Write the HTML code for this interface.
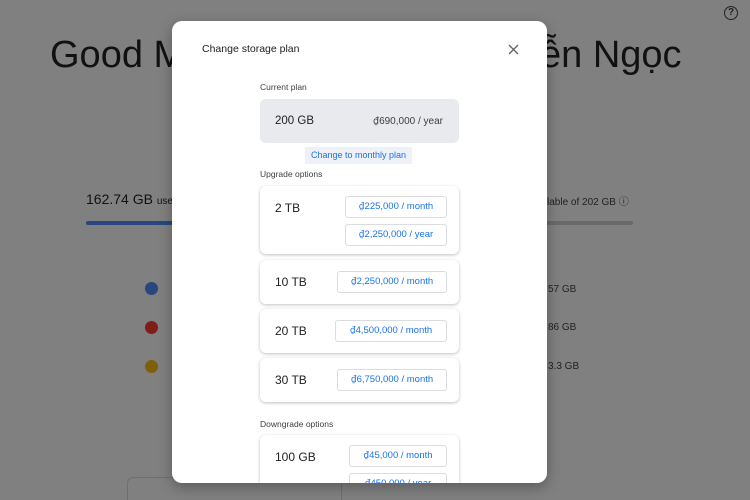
<!DOCTYPE html>
<html><head><style>
*{box-sizing:border-box;margin:0;padding:0}
html,body{width:750px;height:500px;overflow:hidden}
body{background:#808080;font-family:"Liberation Sans","Noto Sans CJK SC",sans-serif;position:relative;color:#202124}
.a{position:absolute}
.d{font-family:"DejaVu Sans",sans-serif;font-size:0.95em}
.dlg{left:172px;top:21px;width:375px;height:462px;background:#fff;border-radius:10px;overflow:hidden;box-shadow:0 4px 14px rgba(0,0,0,.3)}
.card{position:absolute;left:88px;width:199px;background:#fff;border-radius:6px;box-shadow:0 1px 3px rgba(0,0,0,.25)}
.btn{position:absolute;border:1px solid #dadce0;border-radius:3px;color:#1a73e8;font-size:9.5px;text-align:center;line-height:20px;height:22px;background:#fff}
.sz{position:absolute;left:15px;font-size:12px;color:#202124}
.lbl{position:absolute;left:88px;font-size:8.5px;color:#3c4043}
</style></head><body>
<div class="a" style="left:50px;top:34px;font-size:38px;color:#111">Good M</div>
<div class="a" style="left:540px;top:34px;font-size:38px;color:#111">ễn Ngọc</div>
<div class="a" style="left:724px;top:6px;width:14px;height:14px;border:1.5px solid #222;border-radius:50%;font-size:10px;line-height:11px;text-align:center;font-weight:bold">?</div>
<div class="a" style="left:86px;top:191px;font-size:14px;color:#111">162.74 GB <span style="font-size:10px">use</span></div>
<div class="a" style="left:547px;top:193px;font-size:10px;color:#222">lable of 202 GB &#9432;</div>
<div class="a" style="left:86px;top:221px;width:547px;height:4px;background:#6a6a6a;border-radius:2px"></div>
<div class="a" style="left:86px;top:221px;width:100px;height:4px;background:#27477e;border-radius:2px"></div>
<div class="a" style="left:145px;top:282px;width:13px;height:13px;border-radius:50%;background:#27477e"></div>
<div class="a" style="left:145px;top:321px;width:13px;height:13px;border-radius:50%;background:#7e1e17"></div>
<div class="a" style="left:145px;top:360px;width:13px;height:13px;border-radius:50%;background:#7f5f07"></div>
<div class="a" style="left:548px;top:284px;font-size:10px;color:#222">57 GB</div>
<div class="a" style="left:548px;top:322px;font-size:10px;color:#222">86 GB</div>
<div class="a" style="left:548px;top:361px;font-size:10px;color:#222">3.3 GB</div>
<div class="a" style="left:127px;top:477px;width:215px;height:40px;border:1px solid #6e6e6e;border-radius:6px"></div>
<div class="a dlg">
 <div class="a" style="left:30px;top:22px;font-size:10.5px;color:#202124">Change storage plan</div>
 <svg class="a" style="left:336px;top:23px" width="11" height="11" viewBox="0 0 11 11"><path d="M1 1L10 10M10 1L1 10" stroke="#5f6368" stroke-width="1.3"/></svg>
 <div class="lbl" style="top:61px">Current plan</div>
 <div class="a" style="left:88px;top:78px;width:199px;height:44px;background:#e8eaed;border-radius:6px">
  <div class="sz" style="top:16px;font-size:11.5px">200 GB</div>
  <div class="a" style="right:16px;top:17px;font-size:10px;color:#3c4043"><span class="d">₫</span>690,000 / year</div>
 </div>
 <div class="a" style="left:133px;top:126px;width:107px;height:17px;background:#eef2f8;color:#1a73e8;font-size:9px;line-height:17px;text-align:center">Change to monthly plan</div>
 <div class="lbl" style="top:148px">Upgrade options</div>
 <div class="card" style="top:165px;height:68px"><div class="sz" style="top:15px">2 TB</div>
  <div class="btn" style="left:85px;top:10px;width:102px"><span class="d">₫</span>225,000 / month</div>
  <div class="btn" style="left:85px;top:38px;width:102px"><span class="d">₫</span>2,250,000 / year</div></div>
 <div class="card" style="top:239px;height:44px"><div class="sz" style="top:15px">10 TB</div>
  <div class="btn" style="left:77px;top:11px;width:110px"><span class="d">₫</span>2,250,000 / month</div></div>
 <div class="card" style="top:288px;height:44px"><div class="sz" style="top:15px">20 TB</div>
  <div class="btn" style="left:75px;top:11px;width:112px"><span class="d">₫</span>4,500,000 / month</div></div>
 <div class="card" style="top:337px;height:44px"><div class="sz" style="top:15px">30 TB</div>
  <div class="btn" style="left:77px;top:11px;width:110px"><span class="d">₫</span>6,750,000 / month</div></div>
 <div class="lbl" style="top:398px">Downgrade options</div>
 <div class="card" style="top:414px;height:70px"><div class="sz" style="top:15px">100 GB</div>
  <div class="btn" style="left:89px;top:10px;width:98px"><span class="d">₫</span>45,000 / month</div>
  <div class="btn" style="left:89px;top:38px;width:98px"><span class="d">₫</span>450,000 / year</div></div>
</div>
</body></html>
